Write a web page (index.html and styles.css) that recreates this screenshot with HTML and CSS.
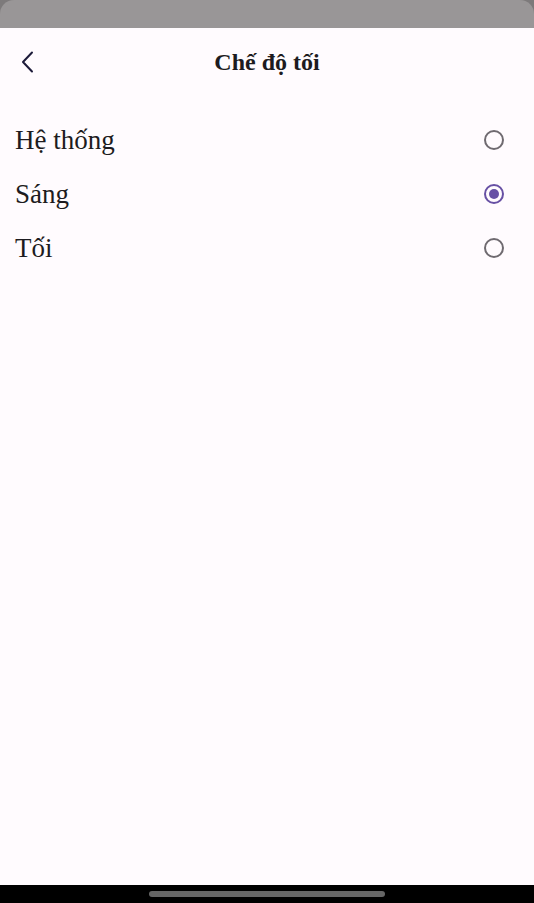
FILE: index.html
```html
<!DOCTYPE html>
<html lang="vi">
<head>
<meta charset="utf-8">
<link rel="stylesheet" href="styles.css">
</head>
<body>
<div class="phone">
  <div class="statusbar-wrap"><div class="statusbar"></div></div>
  <div class="screen">
    <header class="appbar">
      <button class="back" aria-label="Quay lại">
        <svg width="24" height="24" viewBox="0 0 24 24"><path d="M16 2.5 L7 12 L16 21.5" fill="none" stroke="#1d1b3a" stroke-width="2" stroke-linecap="round" stroke-linejoin="round"/></svg>
      </button>
      <h1 class="title">Chế độ tối</h1>
      <span class="spacer"></span>
    </header>
    <ul class="options">
      <li class="option"><span class="label">Hệ thống</span><span class="radio"></span></li>
      <li class="option"><span class="label">Sáng</span><span class="radio checked"></span></li>
      <li class="option"><span class="label">Tối</span><span class="radio"></span></li>
    </ul>
  </div>
  <div class="navbar"><span class="handle"></span></div>
</div>
</body>
</html>
```
FILE: styles.css
```css
* { box-sizing: border-box; }
html, body { margin: 0; padding: 0; }
body {
  background: #000;
  font-family: "Liberation Serif", "DejaVu Serif", serif;
}
.phone {
  width: 534px;
  height: 903px;
  display: flex;
  flex-direction: column;
  background: #000;
  overflow: hidden;
}
.statusbar-wrap {
  flex: none;
  background: #7d7a7b;
}
.statusbar {
  height: 28px;
  background: #999697;
  border-radius: 14px 14px 0 0;
}
.screen {
  flex: 1;
  background: #fffbfe;
  display: flex;
  flex-direction: column;
}
.appbar {
  height: 68px;
  display: flex;
  align-items: center;
  padding: 0 12px 0 12px;
}
.back {
  width: 32px;
  height: 32px;
  border: 0;
  background: none;
  padding: 0;
  display: flex;
  align-items: center;
  justify-content: center;
}
.title {
  flex: 1;
  margin: 0;
  text-align: center;
  font-size: 24px;
  font-weight: 700;
  color: #1d1b20;
}
.spacer { width: 32px; }
.options {
  list-style: none;
  margin: 17px 0 0;
  padding: 0;
}
.option {
  height: 54px;
  display: flex;
  align-items: center;
  justify-content: space-between;
  padding: 0 30px 0 15px;
}
.label {
  font-size: 27px;
  color: #1d1b20;
}
.radio {
  width: 20px;
  height: 20px;
  border-radius: 50%;
  border: 2px solid #6f6a70;
  display: flex;
  align-items: center;
  justify-content: center;
}
.radio.checked { border-color: #6750a4; }
.radio.checked::after {
  content: "";
  width: 10px;
  height: 10px;
  border-radius: 50%;
  background: #6750a4;
}
.navbar {
  height: 18px;
  flex: none;
  background: #000;
  display: flex;
  justify-content: center;
  padding-top: 6px;
}
.handle {
  width: 236px;
  height: 6px;
  border-radius: 3px;
  background: #666;
}
```
